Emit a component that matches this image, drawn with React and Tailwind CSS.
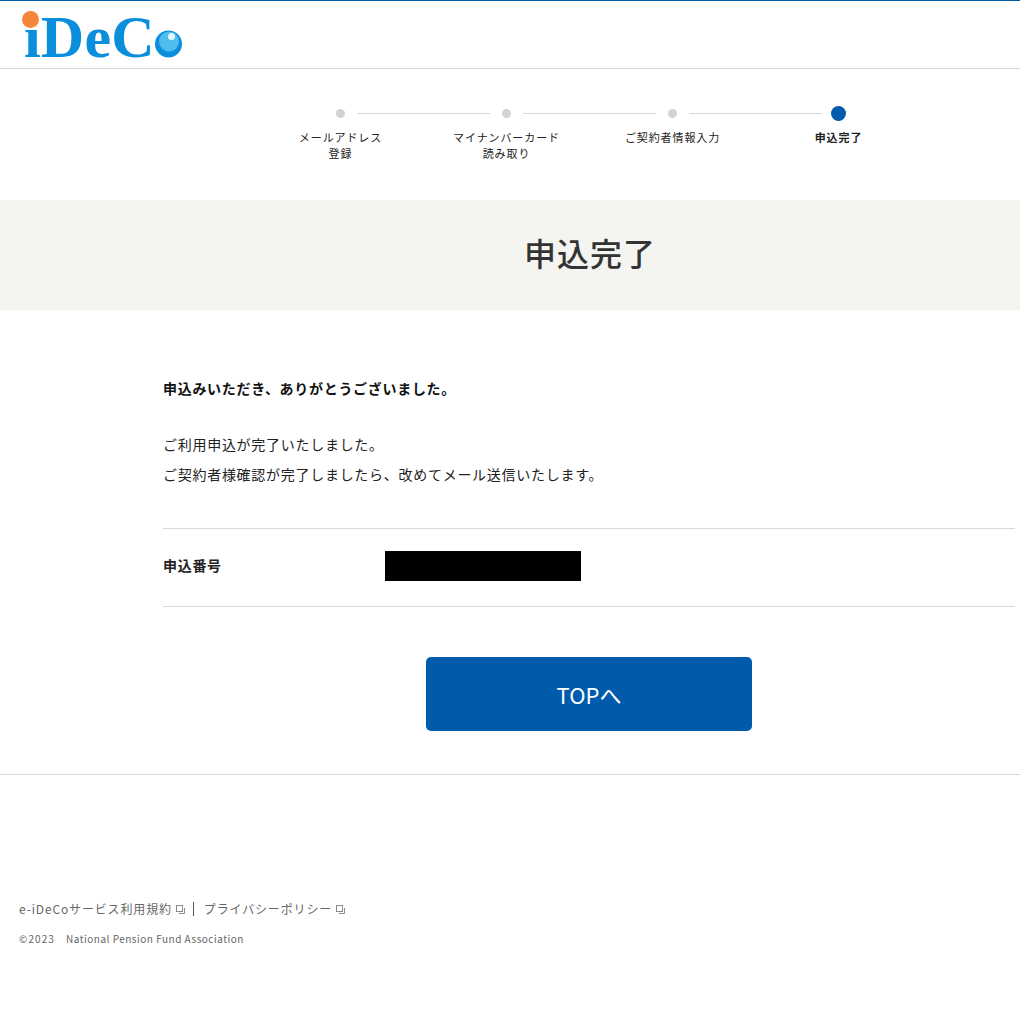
const jp = { fontFamily: '"Noto Sans CJK JP", "Liberation Sans", sans-serif' };

function Logo() {
  return (
    <div className="relative h-[58px] w-[190px]">
      <div
        className="absolute left-[24px] top-[2px] text-[60px] leading-[68px] font-bold tracking-[0.2px] text-[#0b8fdc] whitespace-nowrap"
        style={{ fontFamily: '"Liberation Serif", serif' }}
      >
        iDeC
      </div>
      <div className="absolute left-[22px] top-[10px] h-[17px] w-[17px] rounded-full bg-[#f5853a]" />
      <svg className="absolute left-[155px] top-[26px]" width="28" height="32" viewBox="0 0 28 32">
        <circle cx="13.5" cy="17" r="13.5" fill="#0b8fdc" />
        <circle cx="14" cy="14.5" r="10" fill="#4fbdee" />
        <circle cx="16.5" cy="9.5" r="3.5" fill="#e6f6fd" />
      </svg>
    </div>
  );
}

function Step({ label, active }) {
  return (
    <div className="flex w-[166px] flex-col items-center">
      <div className="flex h-[16px] items-center justify-center">
        <div className={active ? "h-[15px] w-[15px] rounded-full bg-[#005bac]" : "h-[9px] w-[9px] rounded-full bg-[#d2d2d2]"} />
      </div>
      <div className={`mt-[8px] pl-[1px] text-center text-[11px] leading-[16px] tracking-[0.9px] text-[#222] whitespace-pre-line ${active ? "font-bold" : ""}`}>
        {label}
      </div>
    </div>
  );
}

function Connector() {
  return <div className="mt-[7.5px] h-px w-[133px] shrink-0 -mx-[66.5px] bg-[#d8d8d8]" />;
}

function ExtIcon() {
  return (
    <svg className="ml-[3px] inline-block" width="11" height="11" viewBox="0 0 11 11" fill="none" stroke="#8a8a8a" strokeWidth="1">
      <rect x="1.5" y="1.5" width="6" height="6" />
      <path d="M9.5 4v5.5H4" />
    </svg>
  );
}

export default function App() {
  return (
    <div className="min-h-[1024px] w-[1020px] bg-white text-[#222]" style={jp}>
      <header className="flex h-[69px] items-start border-t border-b border-t-[#005bac] border-b-[#d9d9d9]">
        <Logo />
      </header>

      <div className="flex h-[131px] justify-start pl-[257px] pt-[36px]">
        <Step label={"メールアドレス\n登録"} />
        <Connector />
        <Step label={"マイナンバーカード\n読み取り"} />
        <Connector />
        <Step label="ご契約者情報入力" />
        <Connector />
        <Step label="申込完了" active />
      </div>

      <div className="flex h-[110px] items-center justify-center bg-[#f4f4f1] pb-[6px] pl-[160px]">
        <h1 className="text-[32px] leading-none font-medium tracking-[1px] text-[#333]">申込完了</h1>
      </div>

      <main className="ml-[163px] mr-[5px]">
        <p className="mt-[68px] text-[14px] leading-[20px] font-bold tracking-[0.7px] text-[#111]">申込みいただき、ありがとうございました。</p>
        <p className="mt-[31px] text-[14px] leading-[30px] tracking-[0.72px] text-[#222]">
          ご利用申込が完了いたしました。
          <br />
          ご契約者様確認が完了しましたら、改めてメール送信いたします。
        </p>

        <div className="mt-[39px] flex h-[79px] items-center border-t border-b border-[#d9d9d9] pb-[4px]">
          <div className="w-[222px] text-[14px] font-bold tracking-[0.7px] text-[#222]">申込番号</div>
          <div className="h-[30px] w-[196px] bg-black" />
        </div>

        <div className="mt-[50px] flex justify-center">
          <button className="flex h-[74px] w-[326px] items-center justify-center rounded-[5px] bg-[#005bac] text-[22px] text-white">
            TOPへ
          </button>
        </div>
      </main>

      <div className="mt-[43px] h-px bg-[#d9d9d9]" />

      <footer className="pl-[19px] pt-[125px] text-[#666]">
        <div className="flex items-center text-[12px] leading-[18px] tracking-[0.85px]">
          <span>e-iDeCoサービス利用規約</span>
          <ExtIcon />
          <span className="mx-[7px] h-[14px] w-px bg-[#555]" />
          <span className="ml-[3px]">プライバシーポリシー</span>
          <ExtIcon />
        </div>
        <div className="mt-[13px] text-[10px] leading-[16px] tracking-[0.5px]">
          <span className="tracking-[1.1px]">©2023</span><span className="ml-[11px]">National Pension Fund Association</span>
        </div>
      </footer>
    </div>
  );
}
